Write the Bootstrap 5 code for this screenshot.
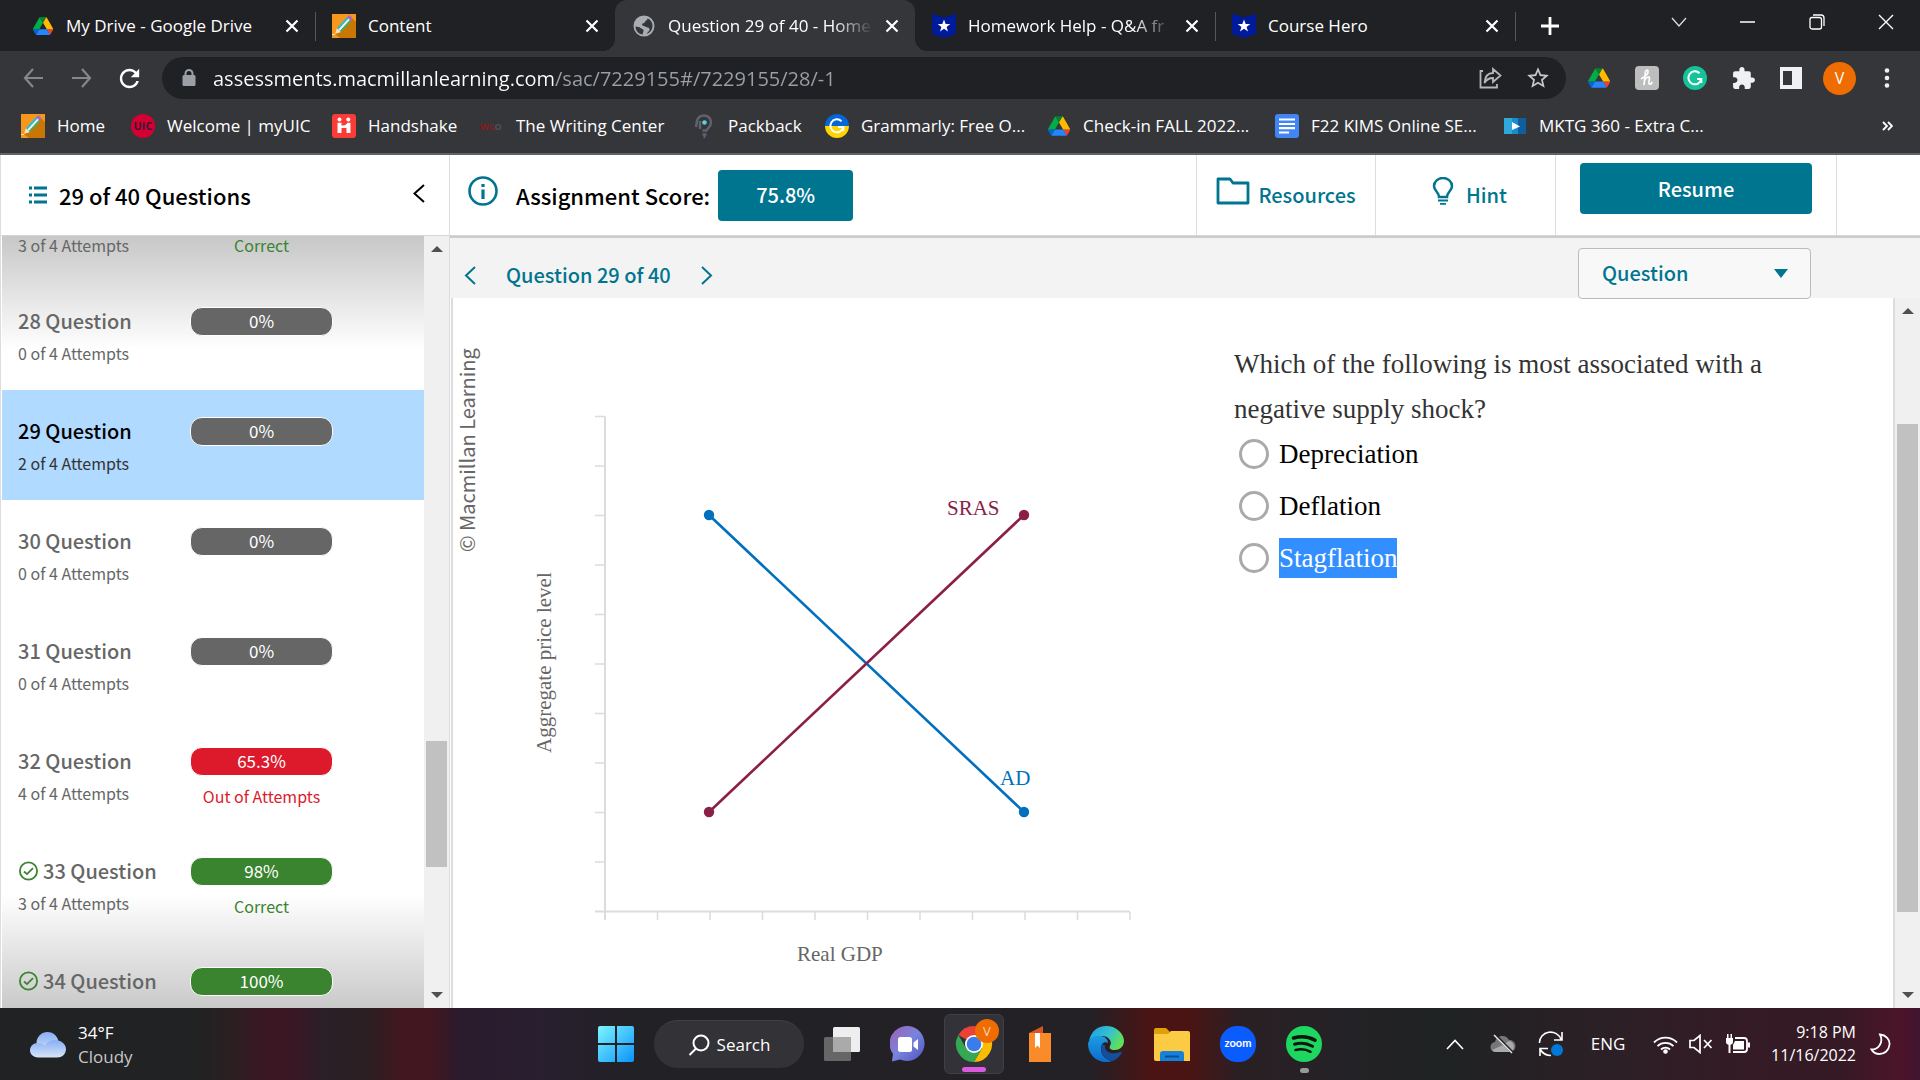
<!DOCTYPE html>
<html lang="en">
<head>
<meta charset="utf-8">
<meta name="viewport" content="width=device-width, initial-scale=1">
<title>Question 29 of 40 - Homework</title>
<link href="https://cdn.jsdelivr.net/npm/bootstrap@5.3.0/dist/css/bootstrap.min.css" rel="stylesheet">
<style>
:root{--teal:#00758f;--ui:"Open Sans","Noto Sans",sans-serif;--app:"Noto Sans CJK SC","Noto Sans",sans-serif;--serif:"Liberation Serif",serif}
body{font-family:var(--app);color:#000;background:#fff;overflow:hidden}
button{font-family:inherit}
svg{display:block;flex:none}
.plain{border:0;background:none;padding:0;display:flex;align-items:center;justify-content:center;color:inherit}
/* browser */
.browser{font-family:var(--ui);background:#35363a;color:#fff;border-bottom:2px solid #5f6368}
.tabstrip{background:#202124;height:51px;padding-left:15px}
.tab-item{width:300px;height:51px;padding:0 16px 0 17px;gap:12px;font-size:17px;position:relative}
.tab-item.sep::after{content:"";position:absolute;right:-1px;top:12px;width:1px;height:29px;background:#56585c}
.tab-item.current{background:#35363a;border-radius:12px 12px 0 0}
.tab-item.current::before,.tab-item.current::after{content:"";position:absolute;bottom:0;width:12px;height:12px}
.tab-item.current::before{left:-12px;background:radial-gradient(circle at 0 0,transparent 12px,#35363a 12px)}
.tab-item.current::after{right:-12px;background:radial-gradient(circle at 100% 0,transparent 12px,#35363a 12px)}
.tab-name{flex:1;min-width:0;overflow:hidden;white-space:nowrap;line-height:24px}
.tab-name.fade-end{-webkit-mask-image:linear-gradient(90deg,#000 calc(100% - 40px),transparent);mask-image:linear-gradient(90deg,#000 calc(100% - 40px),transparent)}
.win-btn{width:69px;height:36px}
.tools{height:54px;padding:6px 9px}
.tool-btn{width:48px;height:42px}
.omni{background:#202124;border-radius:21px;height:42px;margin:0 9px;padding-left:18px}
.omni input{flex:1;min-width:0;border:0;outline:0;padding:0;height:40px;font-size:20px;background:linear-gradient(90deg,#fff 342px,#9aa0a6 342px);-webkit-background-clip:text;background-clip:text;color:transparent}
.omni label{width:18px;margin-right:15px}
.bookmarks{height:48px;padding:0 9px 6px 21px;display:grid;grid-template-columns:110px 201px 148px 212px 133px 222px 228px 228px 228px 1fr;align-items:center;font-size:17px}
.bookmarks a{color:#fff;text-decoration:none;display:flex;align-items:center;gap:12px;white-space:nowrap;line-height:24px}
/* application */
.side{width:450px;border-left:1px solid #ddd;border-right:1px solid #ddd;flex:none}
.bar{height:81px;border-bottom:1px solid #d5d5d5;flex:none}
.side .bar{padding:0 24px 0 28px}
.h-text{font-size:20px;font-weight:500;line-height:30px}
.h-main{font-size:22px;font-weight:500;line-height:30px}
.side-list{flex:1;min-width:0;overflow:hidden;margin-left:1px;display:flex;flex-direction:column;justify-content:flex-end;background:linear-gradient(rgba(0,0,0,.22),transparent 114px),linear-gradient(0deg,rgba(0,0,0,.21),transparent 114px)}
.q-row{height:110px;padding:25px 0 0 16px;flex:none;color:#666;text-decoration:none;display:grid;grid-template-columns:172px 143px;align-content:start}
.q-row.peek{height:44px;padding-top:0}
.q-row.peek .q-try,.q-row.peek .q-note{padding-top:0;line-height:18px}
.q-row:last-child{height:68px}
.q-row.active{background:#b0daff;color:#000}
.q-name{font-size:20px;font-weight:500;line-height:30px;display:flex;align-items:center;gap:5px}
.q-try{font-size:16px;line-height:24px;padding-top:5px}
.q-row.active .q-try{color:#333}
.q-pill{border:1px solid #fff;border-radius:12px;height:29px;margin-top:2px;background:#666;color:#fff;text-align:center;font-size:17px;line-height:26px}
.q-pill.bad{background:#dc1a2b}.q-pill.good{background:#3a832f}
.q-note{font-size:16px;line-height:24px;padding-top:8px;text-align:center}
.q-note.bad{color:#dc1a2b}.q-note.good{color:#3a832f}
.scroller{background:#f0f0f0;width:25px;flex:none;padding:10px 0;display:flex;flex-direction:column;align-items:center}
.scroller.wide{width:27px;border-left:2px solid #ddd}
.thumb{background:#c1c1c1;width:21px}
.teal{color:var(--teal)}
.btn-teal{background:var(--teal);color:#fff;border:0;border-radius:4px;font-size:20px;font-weight:500;height:51px;line-height:30px}
.btn-teal:hover{background:#006279;color:#fff}
.score{width:135px}
.info{padding-left:18px;gap:18px}
.cell{border-left:1px solid #ddd;height:80px}
.c-res{width:179px}.c-hint{width:180px}.c-resume{width:281px;padding:8px 24px}.c-end{width:84px}
.subbar{background:#f3f3f3;height:62px;border-top:2px solid #ccc;flex:none;padding:0 109px 0 14px}
.pager{padding-top:22px;gap:30px}
.subbar .form-select{width:233px;height:51px;margin-top:10px;border:1px solid #bbb;border-radius:4px;background-color:#f8f8f8;color:var(--teal);font-size:20px;font-weight:500;line-height:30px;padding:8px 40px 10px 23px;background-size:14px 9px;background-position:right 22px center;background-image:url("data:image/svg+xml,%3Csvg xmlns='http://www.w3.org/2000/svg' viewBox='0 0 14 9'%3E%3Cpath fill='%2300758f' d='M0 0h14L7 9z'/%3E%3C/svg%3E")}
.sheet{margin-left:1px;border-left:2px solid #ddd}
.prompt{font-family:var(--serif);padding:44px 0 0 81px;width:640px}
.prompt p{font-size:27px;line-height:45px;color:#333;margin:0 0 -4px}
.opt{height:52px;gap:10px;padding-left:5px}
.opt .form-check-input{width:30px;height:30px;margin:0;border:3px solid #aaa;flex:none}
.opt label{font-size:27px;line-height:40px;color:#000}
.opt .picked{background:#338fff;color:#fff}
.chart{font-family:var(--serif);font-size:21px}
/* taskbar */
.taskbar{height:72px;flex:none;font-family:var(--ui);color:#fff;display:grid;grid-template-columns:1fr auto 1fr;align-items:center;background:linear-gradient(90deg,#202223 0,#202223 190px,#2a2022 230px,#3b1724 265px,#3b1724 290px,#2b1f28 325px,#2c1f22 370px,#421720 400px,#421720 430px,#2b1b2d 460px,#281f30 540px,#222126 630px,#232126 1090px,#4a1414 1150px,#4a1414 1190px,#2a2024 1240px,#242226 1340px,#1f2223 1440px,#2b2025 1600px,#341b26 1740px,#351a25 1840px,#4c1428 1900px,#401430 1920px)}
.weather{padding:2px 0 0 29px;gap:11px;font-size:17px;line-height:24px}
.weather small{color:#c8c8c8;font-size:17px}
.dock{gap:6px}
.app-btn{width:60px;height:60px;position:relative}
.opened{background:#333238;border:1px solid #403f45;border-radius:6px}
.find{width:150px;height:48px;border-radius:24px;background:#333237;border-top:1px solid #414046;gap:7px;font-size:17px;margin:0 2px}
.runline{position:absolute;bottom:1px;left:17px;width:24px;height:5px;border-radius:3px;background:#dc5ae0}
.rundot{position:absolute;bottom:1px;left:26px;width:9px;height:5px;border-radius:3px;background:#999}
.tray{padding-right:16px;font-size:17px}
.w48{width:48px;height:48px}.w36{width:36px;height:48px}
.lang{width:66px;height:48px;margin-right:6px}
.clock{width:101px;text-align:right;line-height:23px;white-space:nowrap;font-size:16px}
</style>
</head>
<body class="d-flex flex-column vh-100">
<svg width="0" height="0" class="position-absolute" aria-hidden="true">
<defs>
<symbol id="drive" viewBox="-4 -5 95 88"><path d="m6.6 66.85 3.85 6.65c.8 1.4 1.95 2.5 3.3 3.3l13.75-23.8h-27.5c0 1.55.4 3.1 1.2 4.5z" fill="#0066da"/><path d="m43.65 25-13.75-23.8c-1.35.8-2.5 1.9-3.3 3.3l-25.4 44a9.06 9.06 0 0 0-1.2 4.5h27.5z" fill="#00ac47"/><path d="m73.55 76.8c1.35-.8 2.5-1.9 3.3-3.3l1.6-2.75 7.65-13.25c.8-1.4 1.2-2.95 1.2-4.5h-27.5l5.85 11.5z" fill="#ea4335"/><path d="m43.65 25 13.75-23.8c-1.35-.8-2.9-1.2-4.5-1.2h-18.5c-1.6 0-3.15.45-4.5 1.2z" fill="#00832d"/><path d="m59.8 53h-32.3l-13.75 23.8c1.35.8 2.9 1.2 4.5 1.2h50.8c1.6 0 3.15-.45 4.5-1.2z" fill="#2684fc"/><path d="m73.4 26.5-12.7-22c-.8-1.4-1.95-2.5-3.3-3.3l-13.75 23.8 16.15 28h27.45c0-1.55-.4-3.1-1.2-4.5z" fill="#ffba00"/></symbol>
<symbol id="pencil" viewBox="0 0 24 24"><path fill="#f7981c" d="M0 0h24v24H0z"/><path fill="#c87606" d="M20 4l4 4v16H8l-5-4z"/><path fill="#f7e3c0" d="M3 20l2-6 4 4z"/><path fill="#2fb9d6" d="M5 14L15 3l2 1.5L7 16z"/><path fill="#e8fbf4" d="M6.500 15.500l10-11 1.500 1.200-10 11z"/><path fill="#35b573" d="M8 17L18 6l1 1.500L9 18z"/><path fill="#b266c4" d="M15 3l1.500-1.500c1.800-.6 4 1.500 3.500 3.500l-1.200 2z"/><path stroke="#f7e3c0" d="M0 20.500h3"/></symbol>
<symbol id="hero" viewBox="0 0 24 24"><path fill="#001a9c" d="M0 0l12 3.500L24 0v20l-12 4-12-4z"/><path fill="#fff" d="M12 5.500l1.700 4.500h4.600l-3.700 2.900 1.400 4.600-4-2.800-4 2.800 1.400-4.600L5.700 10h4.600z"/></symbol>
<symbol id="cross" viewBox="0 0 14 14"><path d="M1.500 1.500l11 11m0-11l-11 11" stroke="#fff" stroke-width="2.200"/></symbol>
<symbol id="okay" viewBox="0 0 20 20"><circle cx="10.500" cy="10" r="8.600" fill="none" stroke="#3a832f" stroke-width="1.800"/><path d="M6 10.500l3 2.600 6-6" fill="none" stroke="#3a832f" stroke-width="1.800"/></symbol>
<symbol id="up" viewBox="0 0 12 6"><path d="M0 6L6 0l6 6z" fill="#505050"/></symbol>
<symbol id="down" viewBox="0 0 12 6"><path d="M0 0l6 6 6-6z" fill="#505050"/></symbol>
</defs>
</svg>

<header class="browser flex-shrink-0">
  <div class="tabstrip d-flex align-items-center">
    <div class="tab-item sep d-flex align-items-center"><svg width="22" height="24"><use href="#drive"/></svg><span class="tab-name">My Drive - Google Drive</span><button class="plain" aria-label="Close tab"><svg width="14" height="14"><use href="#cross"/></svg></button></div>
    <div class="tab-item d-flex align-items-center"><svg width="24" height="24"><use href="#pencil"/></svg><span class="tab-name">Content</span><button class="plain" aria-label="Close tab"><svg width="14" height="14"><use href="#cross"/></svg></button></div>
    <div class="tab-item current d-flex align-items-center"><svg width="24" height="24" viewBox="0 0 24 24"><path fill="#a9adb2" d="M12 1.500a10.500 10.500 0 1 0 0 21 10.500 10.500 0 0 0 0-21zM3.500 12.500c2 .3 4 .3 5 1.500s2.500.5 3 2c.3 1.500-1 2.500-.8 4.500-4-.6-7.200-3.500-7.200-8zM15 20c.3-2.500 3-2.500 2.500-5-.5-2-3-1.500-4.500-2.500-1-1-3-.5-3-2s2.500-1 3-2.500c.2-1.500 2.500-1.500 2.500-3.500 3 1 5 4 5 7.500s-2 6.500-5.500 8z"/></svg><span class="tab-name fade-end">Question 29 of 40 - Home</span><button class="plain" aria-label="Close tab"><svg width="14" height="14"><use href="#cross"/></svg></button></div>
    <div class="tab-item sep d-flex align-items-center"><svg width="24" height="24"><use href="#hero"/></svg><span class="tab-name fade-end">Homework Help - Q&amp;A fr</span><button class="plain" aria-label="Close tab"><svg width="14" height="14"><use href="#cross"/></svg></button></div>
    <div class="tab-item sep d-flex align-items-center"><svg width="24" height="24"><use href="#hero"/></svg><span class="tab-name">Course Hero</span><button class="plain" aria-label="Close tab"><svg width="14" height="14"><use href="#cross"/></svg></button></div>
    <button class="plain win-btn" aria-label="New tab"><svg width="18" height="18" viewBox="0 0 18 18"><path d="M9 0v18M0 9h18" stroke="#fff" stroke-width="2.800"/></svg></button>
    <div class="ms-auto d-flex align-self-start pt-1">
      <button class="plain win-btn" aria-label="Search tabs"><svg width="16" height="10" viewBox="0 0 16 10"><path d="M1 1l7 8 7-8" fill="none" stroke="#ddd" stroke-width="1.300"/></svg></button>
      <button class="plain win-btn" aria-label="Minimise"><svg width="15" height="2"><path d="M0 1h15" stroke="#fff" stroke-width="1.500"/></svg></button>
      <button class="plain win-btn" aria-label="Restore"><svg width="16" height="16" viewBox="0 0 16 16" fill="none" stroke="#fff" stroke-width="1.300"><rect x="1" y="3.500" width="11.500" height="11.500" rx="2"/><path d="M4 1h8a3 3 0 0 1 3 3v8"/></svg></button>
      <button class="plain win-btn" aria-label="Close window"><svg width="16" height="16" viewBox="0 0 16 16"><path d="M1 1l14 14m0-14L1 15" stroke="#fff" stroke-width="1.400"/></svg></button>
    </div>
  </div>
  <div class="tools d-flex align-items-center">
    <button class="plain tool-btn" aria-label="Back"><svg width="21" height="20" viewBox="0 0 21 20" fill="none" stroke="#85878b" stroke-width="2.200"><path d="M20 10H2M10 1L2 10l8 9"/></svg></button>
    <button class="plain tool-btn" aria-label="Forward"><svg width="21" height="20" viewBox="0 0 21 20" fill="none" stroke="#85878b" stroke-width="2.200"><path d="M1 10h18M11 1l8 9-8 9"/></svg></button>
    <button class="plain tool-btn" aria-label="Reload"><svg width="29" height="29" viewBox="0 0 24 24"><path fill="#fff" d="M17.650 6.350C16.200 4.900 14.210 4 12 4c-4.420 0-7.990 3.580-7.990 8s3.570 8 7.990 8c3.730 0 6.840-2.550 7.730-6h-2.080c-.82 2.330-3.040 4-5.650 4-3.310 0-6-2.690-6-6s2.690-6 6-6c1.660 0 3.140.69 4.220 1.780L13 11h7V4z"/></svg></button>
    <div class="omni d-flex align-items-center flex-grow-1">
      <label for="url" aria-label="Address"><svg width="18" height="20" viewBox="0 0 18 20"><rect x="2.500" y="7" width="13" height="11" rx="1.500" fill="#9aa0a6"/><path d="M5.500 8V5.500a3.500 3.500 0 0 1 7 0V8" fill="none" stroke="#9aa0a6" stroke-width="2"/></svg></label>
      <input id="url" type="text" value="assessments.macmillanlearning.com/sac/7229155#/7229155/28/-1">
      <button class="plain tool-btn" aria-label="Share"><svg width="23" height="22" viewBox="0 0 23 22" fill="none" stroke="#b4b6b9" stroke-width="1.800"><path d="M4 4H1.500v16.500H18V17M14 2l7.500 6.500L14 15v-4c-4 0-6.500 1.500-8.500 5 .5-6 3.500-10 8.500-10z"/></svg></button>
      <button class="plain tool-btn me-1" aria-label="Bookmark"><svg width="26" height="26" viewBox="0 0 24 24"><path fill="#c6c8ca" d="M22 9.240l-7.190-.62L12 2 9.190 8.630 2 9.240l5.460 4.730L5.820 21 12 17.270 18.180 21l-1.630-7.030L22 9.240zM12 15.400l-3.760 2.270 1-4.280-3.320-2.880 4.380-.38L12 6.100l1.710 4.040 4.380.38-3.320 2.880 1 4.280L12 15.400z"/></svg></button>
    </div>
    <button class="plain tool-btn" aria-label="Drive"><svg width="24" height="24"><use href="#drive"/></svg></button>
    <button class="plain tool-btn" aria-label="Honey"><svg width="24" height="24" viewBox="0 0 24 24"><rect width="24" height="24" rx="4" fill="#bdbdbd"/><path d="M6.500 12.500c5-2.500 7-5 6.500-7.500-.4-1.500-2.300-1-2.600 1L9 18.500M9.500 14.500c1.500-3.500 5-4.500 5-2.300 0 2-1.500 5.500 0 6 1 .2 2-.7 2.500-1.700" fill="none" stroke="#fff" stroke-width="1.700" stroke-linecap="round"/></svg></button>
    <button class="plain tool-btn" aria-label="Grammarly"><svg width="24" height="24" viewBox="0 0 24 24"><circle cx="12" cy="12" r="12" fill="#15c39a"/><path d="M16.500 7.200A6.500 6.500 0 1 0 18.300 13H14m4.300-.5V17" fill="none" stroke="#fff" stroke-width="2"/></svg></button>
    <button class="plain tool-btn" aria-label="Extensions"><svg width="25" height="25" viewBox="0 0 24 24"><path fill="#f1f1f3" d="M20.500 11H19V7c0-1.100-.9-2-2-2h-4V3.500C13 2.120 11.880 1 10.500 1S8 2.120 8 3.500V5H4c-1.100 0-1.990.9-1.990 2v3.800H3.500c1.490 0 2.700 1.210 2.700 2.700s-1.210 2.700-2.700 2.700H2V20c0 1.100.9 2 2 2h3.800v-1.500c0-1.490 1.210-2.700 2.700-2.700s2.700 1.210 2.700 2.700V22H17c1.100 0 2-.9 2-2v-4h1.500c1.380 0 2.500-1.120 2.500-2.500S21.880 11 20.500 11z"/></svg></button>
    <button class="plain tool-btn" aria-label="Side panel"><svg width="22" height="22" viewBox="0 0 22 22"><path fill="#f1f1f3" fill-rule="evenodd" d="M0 0h22v22H0zM3 4v14h9V4z"/></svg></button>
    <button class="plain tool-btn" aria-label="Profile"><svg width="33" height="33" viewBox="0 0 33 33"><circle cx="16.500" cy="16.500" r="16.500" fill="#ef6c00"/><text x="16.500" y="22" font-size="16" text-anchor="middle" fill="#fff">V</text></svg></button>
    <button class="plain tool-btn" aria-label="Menu"><svg width="6" height="20" viewBox="0 0 6 20" fill="#f1f1f3"><circle cx="3" cy="2.500" r="2.300"/><circle cx="3" cy="10" r="2.300"/><circle cx="3" cy="17.500" r="2.300"/></svg></button>
  </div>
  <nav class="bookmarks">
    <a href="#"><svg width="24" height="24"><use href="#pencil"/></svg>Home</a>
    <a href="#"><svg width="24" height="24" viewBox="0 0 24 24"><circle cx="12" cy="12" r="12" fill="#d50032"/><text x="12" y="16" font-size="11" font-weight="700" text-anchor="middle" fill="#3a1636">UIC</text></svg>Welcome | myUIC</a>
    <a href="#"><svg width="24" height="24" viewBox="0 0 24 24"><rect width="24" height="24" rx="3" fill="#fb3b35"/><g fill="#fff"><circle cx="7.500" cy="5.500" r="2"/><circle cx="16.300" cy="5.500" r="2"/><path d="M5.500 8.700h4v2.800c2 .2 3.500 0 5-1.500l1-1.300h3V19h-4v-5h-5v5h-4z"/></g></svg>Handshake</a>
    <a href="#"><svg width="24" height="24" viewBox="0 0 24 24"><text x="0" y="16" font-size="9" font-weight="700" fill="#8c1a1c">WC<tspan fill="#505055">O</tspan></text></svg>The Writing Center</a>
    <a href="#"><svg width="24" height="24" viewBox="0 0 24 24" fill="none" stroke="#5d636e" stroke-width="2.500"><path d="M4 13l1-6c1-4 4-5.500 7-5.500 4 0 7 3 7 7 0 4-3 5-4.500 8h-4M8 7v8"/><circle cx="12.500" cy="8.500" r="2.300" fill="#5fd0dc" stroke="none"/><path d="M10.500 20.500h4M11.500 23h2"/></svg>Packback</a>
    <a href="#"><svg width="24" height="24" viewBox="0 0 24 24"><path fill="#0566d6" d="M0 12a12 12 0 0 1 24 0z"/><path fill="#ffd500" d="M0 12a12 12 0 0 0 24 0z"/><path d="M16.500 7.200A6.500 6.500 0 1 0 18.300 13H13m5.300-.5V17" fill="none" stroke="#fff" stroke-width="2"/></svg>Grammarly: Free O...</a>
    <a href="#"><svg width="24" height="24"><use href="#drive"/></svg>Check-in FALL 2022...</a>
    <a href="#"><svg width="24" height="24" viewBox="0 0 24 24"><rect width="24" height="24" rx="3" fill="#4285f4"/><path d="M4 5.500h16M4 10h16M4 14.200h16M4 18.500h10" stroke="#fff" stroke-width="2.200"/></svg>F22 KIMS Online SE...</a>
    <a href="#"><svg width="24" height="24" viewBox="0 0 24 24"><path fill="#1a8ccc" d="M1 4h22v16H1z"/><path fill="#0e5f9b" d="M15 4h8v16h-8z"/><path fill="#2fa8dc" d="M1 4h8v16H1z"/><path fill="#fff" d="M9 8l8 4.500L9 16z"/></svg>MKTG 360 - Extra C...</a>
    <button class="plain tool-btn ms-auto" aria-label="More bookmarks"><svg width="11" height="10" viewBox="0 0 11 10" fill="none" stroke="#fff" stroke-width="1.800"><path d="M1 1l4 4-4 4M6 1l4 4-4 4"/></svg></button>
  </nav>
</header>

<div class="d-flex flex-grow-1 overflow-hidden">
  <aside class="side d-flex flex-column">
    <div class="bar d-flex align-items-center">
      <svg width="18" height="18" viewBox="0 0 18 18"><path d="M0 2h3m2 0h13M0 9h3m2 0h13M0 16h3m2 0h13" stroke="#00758f" stroke-width="3"/></svg>
      <span class="h-main ms-2 ps-1">29 of 40 Questions</span>
      <button class="plain ms-auto pb-1" aria-label="Collapse list"><svg width="12" height="19" viewBox="0 0 12 19"><path d="M11 1L1.500 9.500 11 18" fill="none" stroke="#000" stroke-width="2"/></svg></button>
    </div>
    <div class="d-flex flex-grow-1 overflow-hidden">
      <nav class="side-list">
        <a class="q-row peek" href="#" aria-label="27 Question"><span class="q-try">3 of 4 Attempts</span><span class="q-note good">Correct</span></a>
        <a class="q-row" href="#"><span class="q-name">28 Question</span><span class="q-pill">0%</span><span class="q-try">0 of 4 Attempts</span></a>
        <a class="q-row active" href="#" aria-current="true"><span class="q-name">29 Question</span><span class="q-pill">0%</span><span class="q-try">2 of 4 Attempts</span></a>
        <a class="q-row" href="#"><span class="q-name">30 Question</span><span class="q-pill">0%</span><span class="q-try">0 of 4 Attempts</span></a>
        <a class="q-row" href="#"><span class="q-name">31 Question</span><span class="q-pill">0%</span><span class="q-try">0 of 4 Attempts</span></a>
        <a class="q-row" href="#"><span class="q-name">32 Question</span><span class="q-pill bad">65.3%</span><span class="q-try">4 of 4 Attempts</span><span class="q-note bad">Out of Attempts</span></a>
        <a class="q-row" href="#"><span class="q-name"><svg width="20" height="20"><use href="#okay"/></svg>33 Question</span><span class="q-pill good">98%</span><span class="q-try">3 of 4 Attempts</span><span class="q-note good">Correct</span></a>
        <a class="q-row" href="#"><span class="q-name"><svg width="20" height="20"><use href="#okay"/></svg>34 Question</span><span class="q-pill good">100%</span></a>
      </nav>
      <div class="scroller" aria-hidden="true"><svg width="12" height="6"><use href="#up"/></svg><span class="flex-grow-1 d-flex flex-column"><span style="flex:489"></span><span class="thumb" style="flex:126"></span><span style="flex:125"></span></span><svg width="12" height="6"><use href="#down"/></svg></div>
    </div>
  </aside>

  <main class="d-flex flex-column flex-grow-1 overflow-hidden">
    <div class="bar info d-flex align-items-center">
      <svg class="mb-2" width="30" height="30" viewBox="0 0 30 30"><circle cx="15" cy="15" r="13.500" fill="none" stroke="#00758f" stroke-width="2.600"/><path d="M15 8v3m0 2.500V23" stroke="#00758f" stroke-width="3.200"/></svg>
      <div class="d-flex align-items-center gap-2">
        <span class="h-main">Assignment Score:</span>
        <button class="btn btn-teal score px-0">75.8%</button>
      </div>
      <div class="d-flex ms-auto">
        <a href="#" class="cell c-res d-flex align-items-center justify-content-center teal text-decoration-none h-text"><svg class="me-2 mb-2" width="34" height="28" viewBox="0 0 34 28"><path d="M2 2h12l3 4h15v20H2z" fill="none" stroke="#00758f" stroke-width="2.800" stroke-linejoin="round"/></svg>Resources</a>
        <a href="#" class="cell c-hint d-flex align-items-center ps-5 teal text-decoration-none h-text"><svg class="ms-2 me-2 mb-2" width="22" height="28" viewBox="0 0 22 28" fill="none" stroke="#00758f" stroke-width="2.500"><path d="M7 20c0-5-5-6-5-11a9 8 0 0 1 18 0c0 5-5 6-5 11z"/><path d="M6 23.500h10M8 26.800h6" stroke-width="1.800"/></svg><span class="ms-1">Hint</span></a>
        <div class="cell c-resume"><button class="btn btn-teal w-100">Resume</button></div>
        <div class="cell c-end"></div>
      </div>
    </div>
    <div class="subbar d-flex align-items-start">
      <div class="pager d-flex align-items-center teal">
        <button class="plain" aria-label="Previous question"><svg width="12" height="19" viewBox="0 0 12 19"><path d="M11 1L2 9.500 11 18" fill="none" stroke="#00758f" stroke-width="2"/></svg></button>
        <span class="h-text">Question 29 of 40</span>
        <button class="plain" aria-label="Next question"><svg width="12" height="19" viewBox="0 0 12 19"><path d="M1 1l9 8.500L1 18" fill="none" stroke="#00758f" stroke-width="2"/></svg></button>
      </div>
      <select class="form-select ms-auto" aria-label="View"><option>Question</option></select>
    </div>
    <div class="sheet d-flex flex-grow-1 overflow-hidden">
      <svg class="chart" width="700" height="708" viewBox="453 298 700 708" role="img" aria-label="Supply and demand graph">
        <g fill="none" stroke="#dcdcdc" stroke-width="2"><path d="M605 416.500V920M595 911.500H1130"/><path stroke-width="1.500" d="M595 416.500h10m-10 49.500h10m-10 49.500h10m-10 49.500h10m-10 49.500h10m-10 49.500h10m-10 49.500h10m-10 49.500h10m-10 49.500h10m-10 49.500h10M657.500 912v8m52.500-8v8m52.500-8v8m52.500-8v8m52.500-8v8m52.500-8v8m52.500-8v8m52.500-8v8m52.500-8v8m52.500-8v8"/></g>
        <path d="M709 515L1024 812" stroke="#0070be" stroke-width="2.600"/><g fill="#0070be"><circle cx="709" cy="515" r="5.200"/><circle cx="1024" cy="812" r="5.200"/></g>
        <path d="M709 812L1024 515" stroke="#8a1f47" stroke-width="2.600"/><g fill="#8a1f47"><circle cx="709" cy="812" r="5.200"/><circle cx="1024" cy="515" r="5.200"/></g>
        <text x="947" y="515" fill="#8a1f47">SRAS</text><text x="1000" y="785" fill="#0070be">AD</text><text x="797" y="961" fill="#666">Real GDP</text>
        <text transform="translate(551 753) rotate(-90)" fill="#666">Aggregate price level</text>
        <text transform="translate(475 552) rotate(-90)" fill="#666" font-size="20" font-family="Noto Sans CJK SC, sans-serif">© Macmillan Learning</text>
      </svg>
      <form class="prompt">
        <p>Which of the following is most associated with a negative supply shock?</p>
        <div class="opt d-flex align-items-center"><input class="form-check-input" type="radio" name="answer" id="a1"><label for="a1">Depreciation</label></div>
        <div class="opt d-flex align-items-center"><input class="form-check-input" type="radio" name="answer" id="a2"><label for="a2">Deflation</label></div>
        <div class="opt d-flex align-items-center"><input class="form-check-input" type="radio" name="answer" id="a3"><label for="a3" class="picked">Stagflation</label></div>
      </form>
      <div class="scroller wide ms-auto" aria-hidden="true"><svg width="12" height="6"><use href="#up"/></svg><span class="flex-grow-1 d-flex flex-column"><span style="flex:110"></span><span class="thumb" style="flex:489"></span><span style="flex:80"></span></span><svg width="12" height="6"><use href="#down"/></svg></div>
    </div>
  </main>
</div>

<footer class="taskbar">
  <div class="weather d-flex align-items-center">
    <svg width="38" height="26" viewBox="0 0 38 26"><defs><linearGradient id="cl" x2="0" y2="1"><stop stop-color="#86aef5"/><stop offset="1" stop-color="#d8e4f7"/></linearGradient></defs><circle cx="18.500" cy="11" r="11" fill="url(#cl)"/><path fill="url(#cl)" d="M9 11c3 0 5 1 7 3 1-3 5-6 10-6 6 0 11 4 11 9s-4 8.500-9 8.500H9c-4 0-8-3-8-7s3-7.500 8-7.500z"/></svg>
    <div>34°F<br><small>Cloudy</small></div>
  </div>
  <div class="dock d-flex align-items-center">
    <button class="plain app-btn" aria-label="Start"><svg width="36" height="36" viewBox="0 0 36 36"><defs><linearGradient id="wn" x2="1" y2="1"><stop stop-color="#7df5ff"/><stop offset="1" stop-color="#0a93fb"/></linearGradient></defs><path fill="url(#wn)" d="M2 0h15v17H0V2a2 2 0 0 1 2-2zm17 0h15a2 2 0 0 1 2 2v15H19zM0 19h17v17H2a2 2 0 0 1-2-2zm19 0h17v15a2 2 0 0 1-2 2H19z"/></svg></button>
    <button class="plain find"><svg width="22" height="22" viewBox="0 0 22 22" fill="none" stroke="#fff" stroke-width="2"><circle cx="13" cy="9" r="7.500"/><path d="M8 14.500L1.500 21"/></svg>Search</button>
    <button class="plain app-btn" aria-label="Task view"><svg width="36" height="36" viewBox="0 0 36 36"><rect y="11" width="27" height="24" rx="1.500" fill="#666"/><rect x="9" y="1" width="27" height="25" rx="1.500" fill="#eee"/><path fill="#aaa" d="M9 11h18v15H9z"/></svg></button>
    <button class="plain app-btn" aria-label="Chat"><svg width="36" height="36" viewBox="0 0 36 36"><defs><linearGradient id="ct" x2="1" y2="1"><stop stop-color="#a05db5"/><stop offset=".5" stop-color="#7884dc"/><stop offset="1" stop-color="#5052c0"/></linearGradient></defs><path fill="url(#ct)" d="M18 0a17.500 17.500 0 1 1-8 33.500L2 35.500 3 28A17.500 17.500 0 0 1 18 0z"/><rect x="8" y="11" width="14" height="15" rx="2.500" fill="#fff"/><path fill="#fff" d="M23.500 16.500L28 13v11l-4.500-3.500z"/></svg></button>
    <button class="plain app-btn opened" aria-label="Chrome"><svg width="38" height="38" viewBox="0 0 38 38"><path fill="#ea4335" d="M19 19L3.400 10a18 18 0 0 1 31.200 0z"/><path fill="#fbbc04" d="M19 10h15.600A18 18 0 0 1 19 37l7.800-13.500z"/><path fill="#34a853" d="M11.200 23.500L3.400 10A18 18 0 0 0 19 37l7.800-13.500z"/><circle cx="19" cy="19" r="9" fill="#fff"/><circle cx="19" cy="19" r="7.300" fill="#3a7cec"/></svg><svg class="position-absolute top-0 end-0 mt-1 me-1" width="24" height="24" viewBox="0 0 24 24"><circle cx="12" cy="12" r="12" fill="#ef6c00"/><text x="12" y="16.500" font-size="13" text-anchor="middle" fill="#fbd5b5">V</text></svg><span class="runline"></span></button>
    <button class="plain app-btn" aria-label="Books"><svg width="24" height="36" viewBox="0 0 24 36"><path fill="#d9541e" d="M1 7L15 0v8z"/><path fill="#f98b2b" d="M1 7h22v29H1z"/><path fill="#fff" d="M7 7h5v15l-2.500-2.500L7 22z"/></svg></button>
    <button class="plain app-btn" aria-label="Edge"><svg width="36" height="36" viewBox="0 0 36 36"><defs><linearGradient id="e1" x2="1" y2=".4"><stop stop-color="#1b9de2"/><stop offset=".6" stop-color="#35c1d0"/><stop offset="1" stop-color="#5fe05a"/></linearGradient><linearGradient id="e2" x2="0" y2="1"><stop stop-color="#1b9de2"/><stop offset="1" stop-color="#0d6bd0"/></linearGradient></defs><path fill="url(#e1)" d="M1 15C3 5 10 0 18 0c11 0 18 8 18 15 0 6-5 9-9 9-5 0-6-2-5-4 3-5-2-10-8-10C8 10 3 12 1 15z"/><path fill="url(#e2)" d="M0 18C1 12 7 9 13 10c5 1 7 4 7 7-4-2-7 1-7 6 0 6 5 11 11 12-2 1-4 1-6 1C8 36 0 28 0 18z"/><path fill="#134f9c" d="M14 18c-3 8 2 15 10 17 5-1 8-5 9.500-8 .4-1-.5-1.500-1.500-1-7 3-16 1-15-7-1 0-2 0-3-1z"/></svg></button>
    <button class="plain app-btn" aria-label="File Explorer"><svg width="36" height="36" viewBox="0 0 36 36"><path fill="#e0a106" d="M0 4a2 2 0 0 1 2-2h10l4 4v6H0z"/><path fill="#fbcb43" d="M0 8h14l3-3h17a2 2 0 0 1 2 2v28H2a2 2 0 0 1-2-2z"/><path fill="#1681d8" d="M6 28a3 3 0 0 1 3-3h18a3 3 0 0 1 3 3v7H6z"/><path stroke="#0a4f93" stroke-width="2" d="M11 30.500h14"/></svg></button>
    <button class="plain app-btn" aria-label="Zoom"><svg width="36" height="36" viewBox="0 0 36 36"><rect width="36" height="36" rx="17" fill="#0b5cff"/><text x="18" y="21" font-family="Lato,sans-serif" font-weight="700" font-size="11" text-anchor="middle" fill="#fff">zoom</text></svg></button>
    <button class="plain app-btn" aria-label="Spotify"><svg width="36" height="36" viewBox="0 0 36 36"><circle cx="18" cy="18" r="18" fill="#1ed760"/><g fill="none" stroke="#101510" stroke-linecap="round"><path stroke-width="3.600" d="M7.500 12c7-2 15-1.500 21.500 2.200"/><path stroke-width="3" d="M8.500 18.200c6-1.700 12.500-1 18 2"/><path stroke-width="2.500" d="M9.500 24c5-1.200 10.500-.8 15 1.800"/></g></svg><span class="rundot"></span></button>
  </div>
  <div class="tray d-flex align-items-center justify-content-end">
    <button class="plain w48" aria-label="Hidden icons"><svg width="18" height="11" viewBox="0 0 18 11"><path d="M1 10l8-8.500 8 8.500" fill="none" stroke="#fff" stroke-width="1.600"/></svg></button>
    <button class="plain w48" aria-label="OneDrive"><svg width="26" height="20" viewBox="0 0 26 20"><path fill="#777" d="M5 8a7.500 7.500 0 0 1 14-2 6 6 0 0 1 1 12H6A5 5 0 0 1 5 8z"/><path fill="#aaa" d="M13 11l6-4a6 6 0 0 1 2 11H6a5 5 0 0 1-4-2z"/><path d="M5 1l18 18" stroke="#222" stroke-width="3"/><path d="M4 1l18 18" stroke="#eee" stroke-width="1.500"/></svg></button>
    <button class="plain w48" aria-label="Sync"><svg width="26" height="26" viewBox="0 0 26 26" fill="none" stroke="#fff" stroke-width="1.600"><path d="M1.500 12A11 10.500 0 0 1 23 8.500M24 1v8h-8M2 25v-7.500h8M2 18c2.500 4.500 6 6.500 11 6.500"/><circle cx="19" cy="19" r="6" fill="#0078d7" stroke="none"/></svg></button>
    <button class="plain lang">ENG</button>
    <button class="plain w36" aria-label="Wi-Fi"><svg width="25" height="19" viewBox="0 0 25 19" fill="none" stroke="#fff" stroke-width="1.800"><path d="M1 7.500a16 16 0 0 1 23 0M4.500 11.200a11.500 11.500 0 0 1 16 0M8 14.500a6.500 6.500 0 0 1 9 0"/><circle cx="12.500" cy="16.500" r="2.300" fill="#fff" stroke="none"/></svg></button>
    <button class="plain w36" aria-label="Volume"><svg width="24" height="20" viewBox="0 0 24 20" fill="none" stroke="#fff" stroke-width="1.700"><path d="M1 6.500h4l6-5v17l-6-5H1zM15 6l7.500 8m0-8L15 14"/></svg></button>
    <button class="plain w36" aria-label="Battery"><svg width="25" height="21" viewBox="0 0 25 21"><path fill="none" stroke="#fff" stroke-width="1.800" d="M10 4h9a3 3 0 0 1 3 3v8a3 3 0 0 1-3 3H8"/><path fill="#fff" d="M10 7h9v8.500H8V11zM23 8.500h2v5h-2zM1 4h7v4c0 2-1.500 2.500-2.500 2.700V19h-2v-8.300C2.500 10.500 1 10 1 8zM2 0h1.500v4H2zM5.500 0H7v4H5.500z"/></svg></button>
    <div class="clock">9:18 PM<br>11/16/2022</div>
    <button class="plain w48" aria-label="Focus"><svg width="21" height="22" viewBox="0 0 21 22"><path d="M10 1.500c6 .5 10 5 9.500 10-.5 6-5 9.500-10 9.500-3.500 0-6.500-1.800-8-4.500C8 16.500 14 10 10 1.500z" fill="none" stroke="#fff" stroke-width="1.800"/></svg></button>
  </div>
</footer>
<script src="https://cdn.jsdelivr.net/npm/bootstrap@5.3.0/dist/js/bootstrap.bundle.min.js"></script>
</body>
</html>
